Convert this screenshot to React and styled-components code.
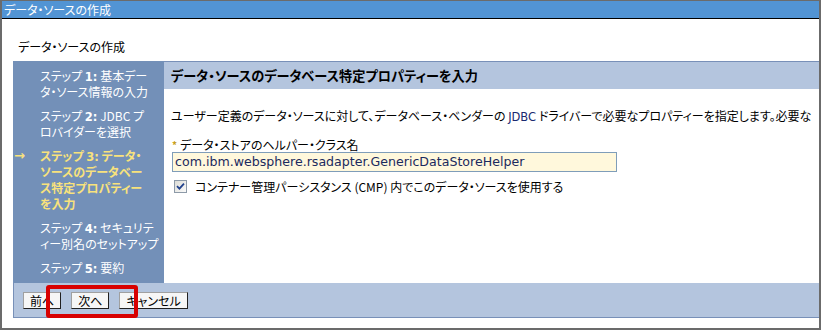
import React from "react";
import styled, { createGlobalStyle } from "styled-components";

const GlobalStyle = createGlobalStyle`
  html, body {
    margin: 0;
    padding: 0;
    background: #ffffff;
  }
  body {
    font-family: "Noto Sans CJK JP", "DejaVu Sans", sans-serif;
    font-size: 12px;
    font-feature-settings: "palt";
  }
`;

const Window = styled.div`
  width: 817px;
  height: 327px;
  border-left: 2px solid #6b6b6b;
  border-right: 2px solid #6b6b6b;
  border-top: 1px solid #6b6b6b;
  border-bottom: 2px solid #6b6b6b;
  display: flex;
  flex-direction: column;
  overflow: hidden;
`;

const TitleBar = styled.div`
  height: 17px;
  background: #5294d4;
  border-bottom: 1px solid #000;
  color: #fff;
  line-height: 17px;
  padding-left: 2px;
  white-space: nowrap;
`;

const Body = styled.div`
  padding: 20px 0 0 11px;
  display: flex;
  flex-direction: column;
`;

const PageHeading = styled.div`
  padding-left: 5px;
  height: 22px;
  line-height: 16px;
  color: #000;
`;

const Wizard = styled.div`
  display: grid;
  grid-template-columns: 151px 1fr;
  grid-template-rows: 222px 35px;
`;

const Nav = styled.div`
  background: #7390b8;
  padding-top: 7px;
  display: flex;
  flex-direction: column;
  gap: 8px;
`;

const Step = styled.div`
  display: grid;
  grid-template-columns: 27px 1fr;
  color: ${(p) => (p.current ? "#f8e27c" : "#ffffff")};
  font-weight: ${(p) => (p.current ? "bold" : "normal")};
  white-space: nowrap;
`;

const Marker = styled.span`
  height: 16px;
  line-height: 16px;
  font-weight: bold;
  padding-left: 1px;
  font-family: "DejaVu Sans", sans-serif;
  font-size: 13px;
`;

const Num = styled.b`
  font-family: "DejaVu Sans", sans-serif;
  font-size: 11.5px;
  line-height: 1;
`;

const Line = styled.span`
  display: block;
  height: 16px;
  line-height: 16px;
`;

const Main = styled.div`
  overflow: hidden;
  display: flex;
  flex-direction: column;
`;

const Band = styled.div`
  height: 27px;
  border-top: 1px solid #7890b8;
  background: #b4c5de;
  padding-left: 7px;
  line-height: 27px;
  font-size: 13.2px;
  font-weight: bold;
  white-space: nowrap;
`;

const Content = styled.div`
  padding: 19px 0 0 7px;
  display: flex;
  flex-direction: column;
`;

const Para = styled.div`
  white-space: nowrap;
  line-height: 16px;
  height: 30px;
`;

const Latin = styled.span`
  font-family: "DejaVu Sans", sans-serif;
  font-size: 11.5px;
  color: #1a2a70;
`;

const FieldLabel = styled.div`
  display: flex;
  align-items: center;
  gap: 3px;
  line-height: 14px;
  height: 14px;
  white-space: nowrap;
`;

const Req = styled.span`
  color: #c8a020;
  font-size: 10px;
  font-weight: bold;
  margin-left: 1px;
`;

const TextField = styled.div`
  margin-left: 1px;
  width: 441px;
  height: 18px;
  border: 1px solid #7f9db9;
  background: #fff8dc;
  color: #1b2a5e;
  font-family: "DejaVu Sans", sans-serif;
  font-size: 12.6px;
  line-height: 18px;
  padding-left: 2px;
  white-space: nowrap;
  overflow: hidden;
`;

const CheckRow = styled.div`
  display: flex;
  align-items: center;
  gap: 8px;
  margin-top: 6px;
  padding-left: 3px;
  white-space: nowrap;
`;

const Box = styled.span`
  width: 11px;
  height: 11px;
  border: 1px solid #8d9aa8;
  background: linear-gradient(135deg, #dcdcd6, #fafafa);
  display: inline-flex;
  align-items: center;
  justify-content: center;
`;

const Bar = styled.div`
  grid-column: 1 / 3;
  position: relative;
  background: #b4c5de;
  border-left: 1px solid #7890b8;
  border-bottom: 1px solid #7890b8;
  display: flex;
  align-items: center;
  gap: 10px;
  padding-left: 9px;
`;

const Button = styled.span`
  height: 15px;
  padding: 0 6px;
  background: #f6f6f6;
  border-top: 1px solid #a0a0a0;
  border-left: 1px solid #a0a0a0;
  border-right: 1px solid #202020;
  border-bottom: 1px solid #202020;
  line-height: 15px;
  color: #000;
`;

const Highlight = styled.div`
  position: absolute;
  left: 32px;
  top: 2px;
  width: 84px;
  height: 25px;
  border: 4px solid #d80000;
  border-radius: 3px;
`;

const steps = [
  { n: "1:", lines: ["基本デー", "タ・ソース情報の入力"] },
  { n: "2:", lines: ["JDBC プ", "ロバイダーを選択"] },
  {
    n: "3:",
    current: true,
    lines: ["データ・", "ソースのデータベー", "ス特定プロパティー", "を入力"],
  },
  { n: "4:", lines: ["セキュリテ", "ィー別名のセットアップ"] },
  { n: "5:", lines: ["要約"] },
];

function Check() {
  return (
    <Box>
      <svg width="9" height="9" viewBox="0 0 9 9">
        <path d="M1 4.2 L3.4 6.6 L8 1.6" stroke="#21418c" strokeWidth="1.8" fill="none" />
      </svg>
    </Box>
  );
}

export default function App() {
  return (
    <>
      <GlobalStyle />
      <Window>
        <TitleBar>データ・ソースの作成</TitleBar>
        <Body>
          <PageHeading>データ・ソースの作成</PageHeading>
          <Wizard>
            <Nav>
              {steps.map((s) => (
                <Step key={s.n} current={s.current}>
                  <Marker>{s.current ? "→" : ""}</Marker>
                  <div>
                    {s.lines.map((l, i) => (
                      <Line key={i}>
                        {i === 0 ? (
                          <>
                            ステップ <Num>{s.n}</Num> {l}
                          </>
                        ) : (
                          l
                        )}
                      </Line>
                    ))}
                  </div>
                </Step>
              ))}
            </Nav>
            <Main>
              <Band>データ・ソースのデータベース特定プロパティーを入力</Band>
              <Content>
                <Para>
                  ユーザー定義のデータ・ソースに対して、データベース・ベンダーの <Latin>JDBC</Latin>{" "}
                  ドライバーで必要なプロパティーを指定します。必要な
                </Para>
                <FieldLabel>
                  <Req>*</Req>
                  データ・ストアのヘルパー・クラス名
                </FieldLabel>
                <TextField>com.ibm.websphere.rsadapter.GenericDataStoreHelper</TextField>
                <CheckRow>
                  <Check />
                  コンテナー管理パーシスタンス (CMP) 内でこのデータ・ソースを使用する
                </CheckRow>
              </Content>
            </Main>
            <Bar>
              <Button>前へ</Button>
              <Button>次へ</Button>
              <Button>キャンセル</Button>
              <Highlight />
            </Bar>
          </Wizard>
        </Body>
      </Window>
    </>
  );
}
